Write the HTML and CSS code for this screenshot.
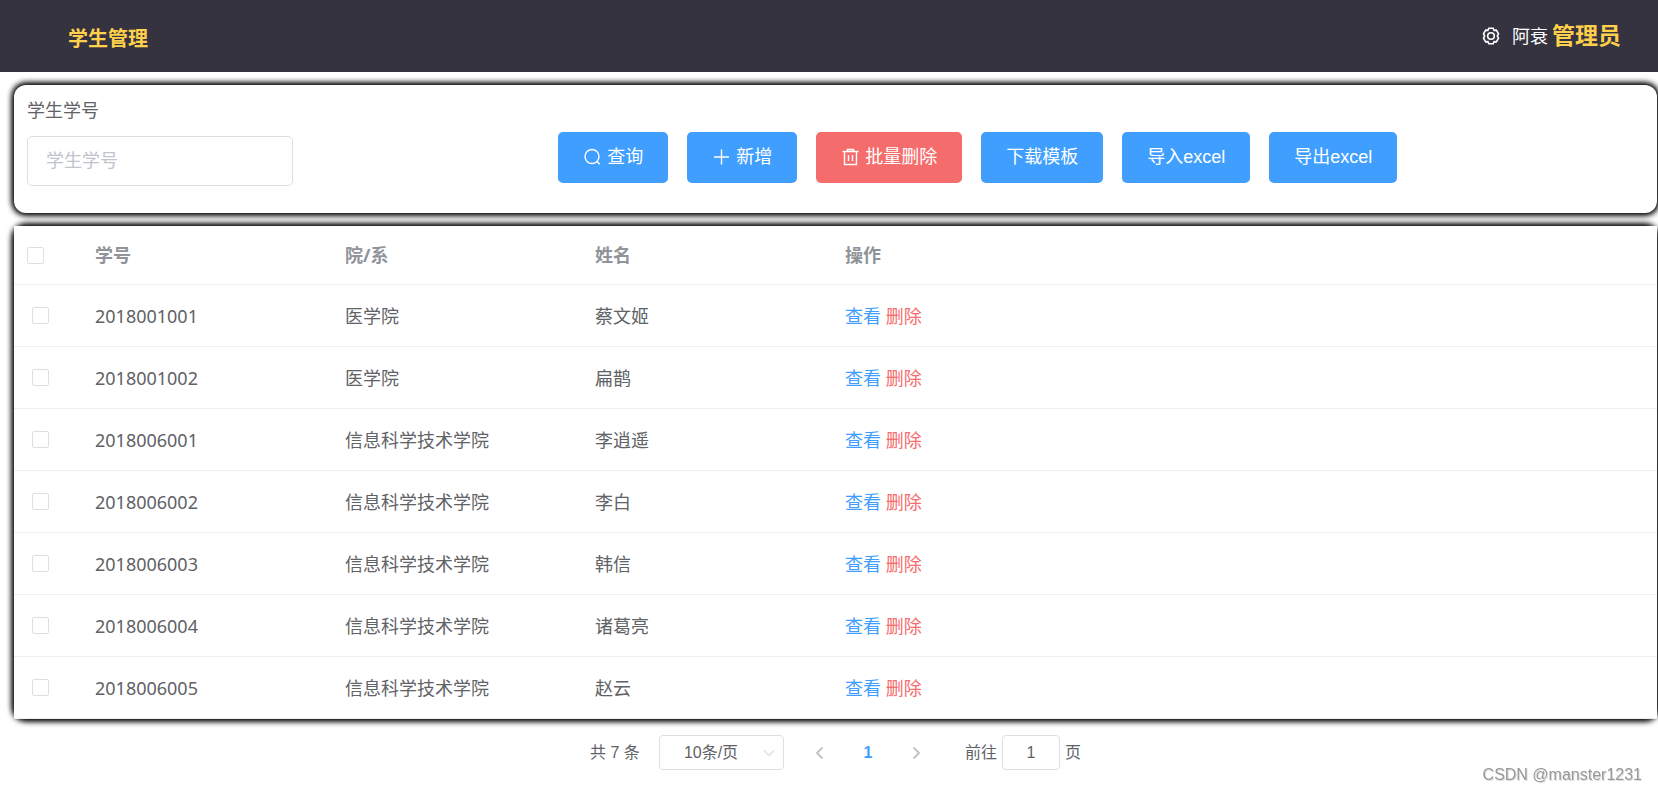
FILE: index.html
```
<!DOCTYPE html>
<html lang="zh-CN">
<head>
<meta charset="utf-8">
<title>学生管理</title>
<link rel="stylesheet" href="styles.css">
</head>
<body>
<header class="topbar">
  <h1 class="topbar-title">学生管理</h1>
  <div class="user">
    <svg class="icon gear" viewBox="0 0 18 18" aria-hidden="true"><path d="M6.800 1.300h4.400l.9 2 2.200-.2 2.200 3.700L15.300 9l1.200 2.200-2.200 3.700-2.200-.2-.9 2H6.800l-.9-2-2.200.2-2.200-3.700L2.700 9 1.500 6.800l2.200-3.700 2.200.2z"/><circle cx="9" cy="9" r="3.300"/></svg>
    <span class="user-name">阿衰</span>
    <strong class="user-role">管理员</strong>
  </div>
</header>
<main class="page">
  <form class="card search">
    <div class="field">
      <label for="sid">学生学号</label>
      <input id="sid" class="text-input" type="text" placeholder="学生学号">
    </div>
    <div class="actions">
      <button type="button" class="btn"><svg class="icon" viewBox="0 0 18 18" aria-hidden="true"><circle cx="9" cy="8.500" r="7"/><path d="M14 13.500l2.700 2.700"/></svg>查询</button>
      <button type="button" class="btn"><svg class="icon" viewBox="0 0 18 18" aria-hidden="true"><path d="M9.500 1.500v15M2 9h15"/></svg>新增</button>
      <button type="button" class="btn btn-danger"><svg class="icon" viewBox="0 0 18 18" aria-hidden="true"><path d="M1.500 3.500h16M6.500 3.500v-2h6v2M3.500 3.500v13h12v-13M7.500 7v6M11.500 7v6"/></svg>批量删除</button>
      <button type="button" class="btn">下载模板</button>
      <button type="button" class="btn">导入excel</button>
      <button type="button" class="btn">导出excel</button>
    </div>
  </form>
  <section class="card">
    <table class="grid">
      <colgroup><col class="col-check"><col class="col-data"><col class="col-data"><col class="col-data"><col></colgroup>
      <thead><tr><th><input type="checkbox" class="check" aria-label="全选"></th><th>学号</th><th>院/系</th><th>姓名</th><th>操作</th></tr></thead>
      <tbody>
        <tr><td><input type="checkbox" class="check" aria-label="2018001001"></td><td>2018001001</td><td>医学院</td><td>蔡文姬</td><td><a href="#" class="link">查看</a> <a href="#" class="link link-danger">删除</a></td></tr>
        <tr><td><input type="checkbox" class="check" aria-label="2018001002"></td><td>2018001002</td><td>医学院</td><td>扁鹊</td><td><a href="#" class="link">查看</a> <a href="#" class="link link-danger">删除</a></td></tr>
        <tr><td><input type="checkbox" class="check" aria-label="2018006001"></td><td>2018006001</td><td>信息科学技术学院</td><td>李逍遥</td><td><a href="#" class="link">查看</a> <a href="#" class="link link-danger">删除</a></td></tr>
        <tr><td><input type="checkbox" class="check" aria-label="2018006002"></td><td>2018006002</td><td>信息科学技术学院</td><td>李白</td><td><a href="#" class="link">查看</a> <a href="#" class="link link-danger">删除</a></td></tr>
        <tr><td><input type="checkbox" class="check" aria-label="2018006003"></td><td>2018006003</td><td>信息科学技术学院</td><td>韩信</td><td><a href="#" class="link">查看</a> <a href="#" class="link link-danger">删除</a></td></tr>
        <tr><td><input type="checkbox" class="check" aria-label="2018006004"></td><td>2018006004</td><td>信息科学技术学院</td><td>诸葛亮</td><td><a href="#" class="link">查看</a> <a href="#" class="link link-danger">删除</a></td></tr>
        <tr><td><input type="checkbox" class="check" aria-label="2018006005"></td><td>2018006005</td><td>信息科学技术学院</td><td>赵云</td><td><a href="#" class="link">查看</a> <a href="#" class="link link-danger">删除</a></td></tr>
      </tbody>
    </table>
  </section>
  <nav class="pager" aria-label="分页">
    <span>共 7 条</span>
    <div class="size">
      <select class="size-select" aria-label="每页条数"><option>10条/页</option></select>
      <svg class="size-arrow" viewBox="0 0 12 12" aria-hidden="true"><path d="M1 3.500l5 5 5-5"/></svg>
    </div>
    <div class="pages">
      <button type="button" class="page-btn" aria-label="上一页" disabled><svg class="chevron" viewBox="0 0 12 12" aria-hidden="true"><path d="M8.500 0.500l-5.500 5.500 5.500 5.500"/></svg></button>
      <button type="button" class="page-btn current">1</button>
      <button type="button" class="page-btn" aria-label="下一页" disabled><svg class="chevron" viewBox="0 0 12 12" aria-hidden="true"><path d="M3.500 0.500l5.500 5.500-5.500 5.500"/></svg></button>
    </div>
    <div class="jump">
      <label for="goto">前往</label>
      <input id="goto" class="jump-input" type="text" value="1">
      <span>页</span>
    </div>
  </nav>
</main>
<div class="watermark">CSDN @manster1231</div>
</body>
</html>
```
FILE: styles.css
```
* { box-sizing: border-box; }

body {
  margin: 0;
  background: #fff;
  color: #606266;
  font: 18px/24px "Noto Sans", "Noto Sans CJK SC", sans-serif;
}

button, input, select { font: inherit; color: inherit; }

.icon {
  width: 18px;
  height: 18px;
  flex: none;
  fill: none;
  stroke: currentColor;
  stroke-width: 1.4;
}

.topbar {
  display: flex;
  align-items: center;
  justify-content: space-between;
  height: 72px;
  padding: 0 37px 0 68px;
  background: #363341;
  color: #fff;
}

.topbar-title {
  margin: 5px 0 0;
  font-size: 20px;
  font-weight: 700;
  color: #ffd04b;
}

.user { display: flex; align-items: center; }
.gear { margin-right: 12px; stroke-width: 1.6; }
.user-name { margin-right: 4px; }
.user-role { padding-bottom: 3px; font-size: 23px; color: #ffd04b; }

.page { padding: 13px 1px 0 14px; }

.card {
  border-radius: 12px;
  box-shadow: 0 -1px 6px 1px #000, 0 1px 6px 1px #000;
  background: #fff;
}

.search {
  display: flex;
  height: 128px;
  margin-bottom: 13px;
}

.field {
  display: flex;
  flex-direction: column;
  flex: 0 0 33%;
  padding: 13px 0 0 13px;
}

.text-input {
  width: 266px;
  height: 50px;
  margin-top: 14px;
  padding: 0 18px 2px;
  border: 1px solid #dcdfe6;
  border-radius: 5px;
  background: #fff;
}

.text-input::placeholder { color: #c0c4cc; opacity: 1; }

.actions {
  display: flex;
  align-items: flex-start;
  gap: 19px;
  padding: 47px 0 0 2px;
}

.btn {
  display: flex;
  align-items: center;
  gap: 6px;
  height: 51px;
  padding: 0 25px 2px;
  border: 0;
  border-radius: 5px;
  background: #409eff;
  color: #fff;
  font-family: "Liberation Sans", "Noto Sans CJK SC", sans-serif;
  white-space: nowrap;
}

.btn-danger { background: #f56c6c; }

.grid {
  width: 100%;
  table-layout: fixed;
  border-collapse: separate;
  border-spacing: 0;
  background: #fff;
}

.col-check { width: 69px; }
.col-data { width: 250px; }

.grid th, .grid td {
  height: 62px;
  padding: 0 12px;
  border-bottom: 1px solid #ebeef5;
  text-align: left;
  background: #fff;
}

.grid th { height: 59px; color: #909399; font-weight: 700; }
.grid td:first-child { padding-left: 18px; }

.check {
  appearance: none;
  display: block;
  width: 17px;
  height: 17px;
  margin: 0;
  border: 1px solid #dcdfe6;
  border-radius: 2px;
  background: #fff;
}

.grid th .check { margin-left: 1px; }

.link { color: #409eff; text-decoration: none; }
.link-danger { color: #f56c6c; }

.pager {
  display: flex;
  align-items: center;
  justify-content: center;
  padding-top: 16px;
  font: 16px/20px "Liberation Sans", "Noto Sans CJK SC", sans-serif;
}

.size { position: relative; margin: 0 12px 0 19px; }

.size-select {
  appearance: none;
  display: block;
  width: 125px;
  height: 35px;
  padding: 0 24px;
  border: 1px solid #dcdfe6;
  border-radius: 4px;
  background: #fff;
}

.size-arrow {
  position: absolute;
  top: 12px;
  right: 9px;
  width: 12px;
  height: 12px;
  fill: none;
  stroke: #c0c4cc;
}

.pages { display: flex; margin-right: 25px; }

.page-btn {
  display: flex;
  align-items: center;
  justify-content: center;
  width: 48px;
  height: 35px;
  padding: 0;
  border: 0;
  background: none;
  color: #c0c4cc;
}

.current { color: #409eff; font-weight: 700; }

.chevron {
  width: 12px;
  height: 12px;
  fill: none;
  stroke: currentColor;
  stroke-width: 2;
}

.jump { display: flex; align-items: center; gap: 5px; }

.jump-input {
  width: 58px;
  height: 35px;
  padding: 0;
  border: 1px solid #dcdfe6;
  border-radius: 4px;
  text-align: center;
}

.watermark {
  position: fixed;
  right: 16px;
  bottom: 6px;
  font: 16px/20px "Liberation Sans", sans-serif;
  color: #999;
  text-shadow: 1px 1px 0 #ddd;
}
```
